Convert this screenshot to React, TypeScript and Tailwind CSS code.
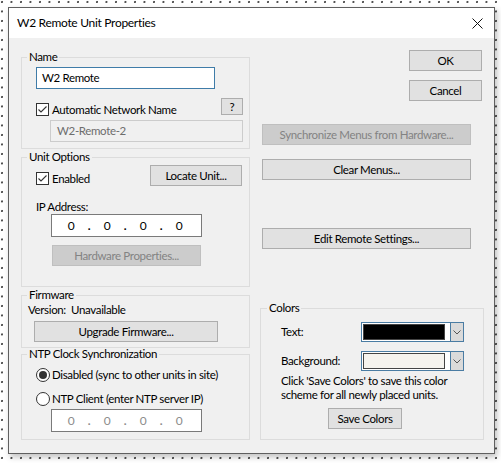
import React from 'react';

type BtnProps = { label: string; disabled?: boolean; className?: string };

// Classic Win32 push button
const Btn = ({ label, disabled, className = '' }: BtnProps) => (
  <button
    type="button"
    disabled={disabled}
    className={`flex shrink-0 items-center justify-center border leading-none ${
      disabled ? 'border-[#bfbfbf] bg-[#cccccc] text-[#838383]' : 'border-[#adadad] bg-[#e1e1e1] text-black'
    } ${className}`}
  >
    {label}
  </button>
);

const Check = () => (
  <span className="flex h-[13px] w-[13px] shrink-0 items-center justify-center border border-[#333] bg-white">
    <svg width="11" height="11" viewBox="0 0 11 11">
      <path d="M1.5 5.5 L4 8 L9.5 2.5" fill="none" stroke="#333" strokeWidth="1.1" />
    </svg>
  </span>
);

const Radio = ({ on }: { on?: boolean }) => (
  <span className="flex h-[14px] w-[14px] shrink-0 items-center justify-center rounded-full border border-[#333] bg-white">
    {on && <span className="h-[8px] w-[8px] rounded-full bg-[#333]" />}
  </span>
);

const IpBox = ({ disabled }: { disabled?: boolean }) => (
  <div
    className={`flex h-[23px] w-[151px] items-center border border-[#7a7a7a] bg-white pl-[8px] text-[12px] ${
      disabled ? 'text-[#8c8c8c]' : 'text-black'
    }`}
  >
    <span className="w-[22px] text-center">0</span>
    <span className="w-[14px] text-center font-bold">.</span>
    <span className="w-[22px] text-center">0</span>
    <span className="w-[14px] text-center font-bold">.</span>
    <span className="w-[22px] text-center">0</span>
    <span className="w-[14px] text-center font-bold">.</span>
    <span className="w-[22px] text-center">0</span>
  </div>
);

const ColorCombo = ({ swatch }: { swatch: string }) => (
  <div className="flex h-[20px] w-[103px] border border-[#4a7ca3] bg-white">
    <div className="flex flex-1 p-[1px]">
      <div className={`flex-1 border border-[#444] ${swatch}`} />
    </div>
    <div className="ml-[4px] flex w-[13px] items-center justify-center border-l border-[#4a7ca3] bg-[#dadada]">
      <svg width="8" height="5" viewBox="0 0 8 5">
        <path d="M0.5 0.5 L4 4 L7.5 0.5" fill="none" stroke="#555" strokeWidth="1" />
      </svg>
    </div>
  </div>
);

type GroupProps = { title: string; className?: string; legendClass?: string; children: React.ReactNode };

const Group = ({ title, className = '', legendClass = 'ml-[5px]', children }: GroupProps) => (
  <fieldset className={`border border-[#dcdcdc] ${className}`}>
    <legend className={`px-[2px] leading-[16px] ${legendClass}`}>{title}</legend>
    {children}
  </fieldset>
);

export default function App() {
  return (
    <div className="h-[463px] w-[501px] overflow-hidden whitespace-nowrap bg-white bg-[radial-gradient(circle_at_2px_2px,#3a3a3a_0.7px,transparent_1.1px)] bg-[length:9.5px_9.5px] pl-[8px] pt-[7px] font-['Segoe_UI','Lato',sans-serif] text-[11.5px] tracking-[-0.35px] text-black">
      <div className="flex h-[447px] w-[487px] flex-col border border-[#5f5f5f] shadow-[2px_3px_6px_rgba(0,0,0,0.25)]">
        {/* title bar */}
        <div className="flex h-[30px] shrink-0 items-center justify-between bg-white pl-[8px] pr-[11px]">
          <span className="text-[12px] tracking-[-0.3px]">W2 Remote Unit Properties</span>
          <svg width="11" height="11" viewBox="0 0 11 11">
            <path d="M0.5 0.5 L10.5 10.5 M10.5 0.5 L0.5 10.5" stroke="#111" strokeWidth="1" />
          </svg>
        </div>

        <div className="flex flex-1 bg-[#f0f0f0] pl-[12px]">
          {/* left column */}
          <div className="flex w-[229px] flex-col pt-[11px]">
            <Group title="Name">
              <div className="flex flex-col pb-[6px] pl-[14px] pr-[6px] pt-[2px]">
                <div className="flex h-[22px] w-[179px] items-center border border-[#3f7ca8] bg-white pl-[5px]">
                  W2 Remote
                </div>
                <div className="mt-[9px] flex h-[17px] items-start justify-between">
                  <label className="mt-[5px] flex h-[13px] items-center gap-[3px]">
                    <Check />
                    <span>Automatic Network Name</span>
                  </label>
                  <Btn label="?" className="h-[17px] w-[22px]" />
                </div>
                <div className="ml-[14px] mt-[5px] flex h-[22px] w-[193px] items-center border border-[#cccccc] bg-[#f0f0f0] pl-[6px] text-[#6d6d6d]">
                  W2-Remote-2
                </div>
              </div>
            </Group>

            <Group title="Unit Options">
              <div className="flex flex-col pb-[20px] pl-[14px] pr-[7px]">
                <div className="flex h-[21px] items-start">
                  <label className="mt-[7px] flex h-[13px] items-center gap-[3px]">
                    <Check />
                    <span>Enabled</span>
                  </label>
                  <Btn label="Locate Unit..." className="ml-auto h-[21px] w-[92px]" />
                </div>
                <span className="mt-[14px] leading-[14px]">IP Address:</span>
                <div className="ml-[15px]">
                  <IpBox />
                </div>
                <Btn label="Hardware Properties..." disabled className="ml-[16px] mt-[8px] h-[21px] w-[149px]" />
              </div>
            </Group>

            <Group title="Firmware">
              <div className="flex flex-col pb-[5px] pl-[6px]">
                <span className="leading-[14px]">Version:&nbsp; Unavailable</span>
                <Btn label="Upgrade Firmware..." className="ml-[6px] mt-[4px] h-[21px] w-[184px]" />
              </div>
            </Group>

            <Group title="NTP Clock Synchronization" className="mt-[-2px]">
              <div className="flex flex-col pb-[7px] pl-[14px]">
                <label className="mt-[5px] flex h-[16px] items-center gap-[2px]">
                  <Radio on />
                  <span>Disabled (sync to other units in site)</span>
                </label>
                <label className="mt-[8px] flex h-[16px] items-center gap-[2px]">
                  <Radio />
                  <span>NTP Client (enter NTP server IP)</span>
                </label>
                <div className="ml-[15px] mt-[2px]">
                  <IpBox disabled />
                </div>
              </div>
            </Group>
          </div>

          {/* right column */}
          <div className="ml-[10px] flex w-[224px] flex-col pt-[12px]">
            <Btn label="OK" className="ml-[149px] h-[21px] w-[73px]" />
            <Btn label="Cancel" className="ml-[149px] mt-[9px] h-[21px] w-[73px]" />
            <Btn label="Synchronize Menus from Hardware..." disabled className="ml-[2px] mt-[23px] h-[21px] w-[209px]" />
            <Btn label="Clear Menus..." className="ml-[2px] mt-[14px] h-[21px] w-[209px]" />
            <Btn label="Edit Remote Settings..." className="ml-[2px] mt-[48px] h-[21px] w-[209px]" />

            <Group title="Colors" className="mt-[51px]" legendClass="ml-[6px]">
              <div className="flex flex-col pb-[10px] pl-[20px]">
                <div className="mt-[6px] flex items-center">
                  <span className="w-[80px]">Text:</span>
                  <ColorCombo swatch="bg-black" />
                </div>
                <div className="mt-[9px] flex items-center">
                  <span className="w-[80px]">Background:</span>
                  <ColorCombo swatch="bg-[#f5f3ee]" />
                </div>
                <p className="mt-[3px] leading-[14px]">
                  Click 'Save Colors' to save this color
                  <br />
                  scheme for all newly placed units.
                </p>
                <Btn label="Save Colors" className="ml-[47px] mt-[6px] h-[21px] w-[74px]" />
              </div>
            </Group>
          </div>
        </div>
      </div>
    </div>
  );
}
